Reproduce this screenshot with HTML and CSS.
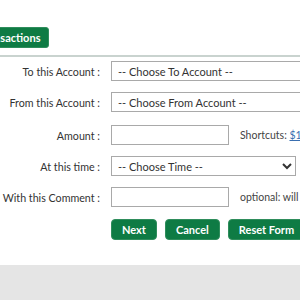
FILE: index.html
```html
<!DOCTYPE html>
<html lang="en">
<head>
  <meta charset="UTF-8" />
  <meta name="viewport" content="width=device-width, initial-scale=1.0" />
  <title>Transfer</title>
  <link rel="stylesheet" href="styles.css">
</head>
<body>
  <div class="page">
    <div class="tab-bar">
      <button class="tab-button">Transactions</button>
    </div>
    <hr class="divider" />

    <form class="transfer-form">
      <label class="form-label">To this Account :</label>
      <div class="form-field">
        <select class="select-wide">
          <option>-- Choose To Account --</option>
        </select>
      </div>

      <label class="form-label">From this Account :</label>
      <div class="form-field">
        <select class="select-wide">
          <option>-- Choose From Account --</option>
        </select>
      </div>

      <label class="form-label amount-row">Amount :</label>
      <div class="form-field amount-row">
        <input type="text" class="text-input" />
        <span class="hint">Shortcuts: <a href="#">$10</a></span>
      </div>

      <label class="form-label">At this time :</label>
      <div class="form-field">
        <select class="select-time">
          <option>-- Choose Time --</option>
        </select>
      </div>

      <label class="form-label">With this Comment :</label>
      <div class="form-field">
        <input type="text" class="text-input" />
        <span class="hint">optional: will</span>
      </div>

      <div></div>
      <div class="form-buttons">
        <button type="button" class="green-button">Next</button>
        <button type="button" class="green-button">Cancel</button>
        <button type="reset" class="green-button">Reset Form</button>
      </div>
    </form>
  </div>
  <div class="footer"></div>
</body>
</html>
```

FILE: styles.css
```css
/* Global Styling */
body {
  font-family: Lato, "Open Sans", sans-serif;
  font-size: 11px;
  color: #333333;
  margin: 0;
  padding: 0;
  overflow: hidden;
  background-color: #ffffff;
}

.page {
  height: 265px;
}

/* Tab Section */
.tab-bar {
  padding-top: 27px;
  height: 21px;
  white-space: nowrap;
}

.tab-button {
  margin-left: -30px;
  height: 21px;
  padding: 0 8px;
  font-family: inherit;
  font-size: 11px;
  font-weight: bold;
  color: #ffffff;
  background-color: #0e7b44;
  border: 1px solid #2f8d5c;
  border-radius: 3px;
}

.divider {
  margin: 7px 0 0 0;
  border: none;
  border-top: 2px solid #c9d3cf;
}

/* Form Layout */
.transfer-form {
  display: grid;
  grid-template-columns: 100px 1fr;
  column-gap: 11px;
  row-gap: 11px;
  margin-top: 4px;
  align-items: center;
}

.form-label {
  text-align: right;
  white-space: nowrap;
  font-size: 10.7px;
}

.form-field {
  display: flex;
  align-items: center;
  gap: 11px;
  white-space: nowrap;
  height: 20px;
}

.amount-row {
  margin-top: 2px;
}

select {
  height: 20px;
  font-family: inherit;
  font-size: 11px;
  color: #333333;
  background-color: #ffffff;
  border: 1px solid #a9a9a9;
  border-radius: 0;
  padding: 0 2px;
}

.select-wide {
  width: 260px;
  flex-shrink: 0;
}

.select-time {
  width: 185px;
}

.text-input {
  width: 118px;
  height: 20px;
  box-sizing: border-box;
  border: 1px solid #a9a9a9;
  padding: 0 4px;
  flex-shrink: 0;
}

.hint {
  color: #444444;
  font-size: 10.5px;
}

.hint a {
  color: #3a6fb0;
}

/* Buttons Styling */
.form-buttons {
  display: flex;
  gap: 8px;
  margin-top: 1px;
  white-space: nowrap;
}

.green-button {
  height: 21px;
  padding: 0 10px;
  font-family: inherit;
  font-size: 11px;
  font-weight: bold;
  color: #ffffff;
  background-color: #0e7b44;
  border: 1px solid #2f8d5c;
  border-radius: 4px;
  flex-shrink: 0;
}

.footer {
  height: 35px;
  background-color: #e5e5e5;
}
```
